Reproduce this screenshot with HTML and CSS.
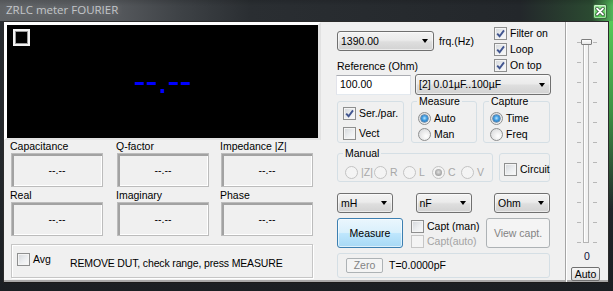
FILE: index.html
```html
<!DOCTYPE html>
<html>
<head>
<meta charset="utf-8">
<title>ZRLC meter FOURIER</title>
<link rel="stylesheet" href="styles.css">
</head>
<body>
<div class="window">
  <div class="titlebar">
    <span class="title">ZRLC meter FOURIER</span>
    <span class="close"><svg width="12" height="13" viewBox="0 0 12 13"><path d="M3 3.5 L9 9.5 M9 3.5 L3 9.5" stroke="#2f4f33" stroke-width="3.4" stroke-linecap="round"/><path d="M3 3.5 L9 9.5 M9 3.5 L3 9.5" stroke="#fff" stroke-width="1.8" stroke-linecap="round"/></svg></span>
  </div>
  <div class="client">
    <div class="left">
      <div class="scope">
        <span class="scope-box"></span>
        <span class="scope-value">--.--</span>
      </div>
      <div class="readings">
        <div class="reading"><div class="reading-label">Capacitance</div><div class="reading-box">--.--</div></div>
        <div class="reading"><div class="reading-label">Q-factor</div><div class="reading-box">--.--</div></div>
        <div class="reading"><div class="reading-label">Impedance |Z|</div><div class="reading-box">--.--</div></div>
        <div class="reading"><div class="reading-label">Real</div><div class="reading-box">--.--</div></div>
        <div class="reading"><div class="reading-label">Imaginary</div><div class="reading-box">--.--</div></div>
        <div class="reading"><div class="reading-label">Phase</div><div class="reading-box">--.--</div></div>
      </div>
      <div class="status">
        <label class="check status-check"><span class="cb"></span><span>Avg</span></label>
        <span class="status-msg">REMOVE DUT, check range, press MEASURE</span>
      </div>
    </div>
    <div class="right">
      <div class="controls">
        <div class="top">
          <div class="top-left">
            <div class="freq-row">
              <div class="combo combo-freq"><span>1390.00</span><i class="arrow"></i></div>
              <span class="freq-label">frq.(Hz)</span>
            </div>
            <div class="ref-label">Reference (Ohm)</div>
          </div>
          <div class="top-checks">
            <label class="check"><span class="cb"><svg class="tick" width="11" height="11" viewBox="0 0 11 11"><path d="M2.2 5.6 L4.6 8.2 L9 2.4" stroke="#41558f" stroke-width="1.9" fill="none"/></svg></span><span>Filter on</span></label>
            <label class="check"><span class="cb"><svg class="tick" width="11" height="11" viewBox="0 0 11 11"><path d="M2.2 5.6 L4.6 8.2 L9 2.4" stroke="#41558f" stroke-width="1.9" fill="none"/></svg></span><span>Loop</span></label>
            <label class="check"><span class="cb"><svg class="tick" width="11" height="11" viewBox="0 0 11 11"><path d="M2.2 5.6 L4.6 8.2 L9 2.4" stroke="#41558f" stroke-width="1.9" fill="none"/></svg></span><span>On top</span></label>
          </div>
        </div>
        <div class="ref-row">
          <div class="input">100.00</div>
          <div class="combo combo-range"><span>[2] 0.01µF..100µF</span><i class="arrow"></i></div>
        </div>
        <div class="groups-row">
          <fieldset class="group group-serpar">
            <div class="group-body col gap7">
              <label class="check"><span class="cb"><svg class="tick" width="11" height="11" viewBox="0 0 11 11"><path d="M2.2 5.6 L4.6 8.2 L9 2.4" stroke="#41558f" stroke-width="1.9" fill="none"/></svg></span><span>Ser./par.</span></label>
              <label class="check"><span class="cb"></span><span>Vect</span></label>
            </div>
          </fieldset>
          <fieldset class="group group-measure">
            <legend>Measure</legend>
            <div class="group-body col">
              <label class="radio"><span class="rb on"><span class="dot"></span></span><span>Auto</span></label>
              <label class="radio"><span class="rb"></span><span>Man</span></label>
            </div>
          </fieldset>
          <fieldset class="group group-capture">
            <legend>Capture</legend>
            <div class="group-body col">
              <label class="radio"><span class="rb on"><span class="dot"></span></span><span>Time</span></label>
              <label class="radio"><span class="rb"></span><span>Freq</span></label>
            </div>
          </fieldset>
        </div>
        <div class="manual-row">
          <fieldset class="group group-manual">
            <legend>Manual</legend>
            <div class="group-body row">
              <label class="radio disabled"><span class="rb"></span><span>|Z|</span></label>
              <label class="radio disabled"><span class="rb"></span><span>R</span></label>
              <label class="radio disabled"><span class="rb"></span><span>L</span></label>
              <label class="radio disabled"><span class="rb on"><span class="dot"></span></span><span>C</span></label>
              <label class="radio disabled"><span class="rb"></span><span>V</span></label>
            </div>
          </fieldset>
          <fieldset class="group group-circuit">
            <div class="group-body">
              <label class="check"><span class="cb"></span><span>Circuit</span></label>
            </div>
          </fieldset>
        </div>
        <div class="units-row">
          <div class="combo combo-unit"><span>mH</span><i class="arrow"></i></div>
          <div class="combo combo-unit"><span>nF</span><i class="arrow"></i></div>
          <div class="combo combo-unit"><span>Ohm</span><i class="arrow"></i></div>
        </div>
        <div class="action-row">
          <div class="btn btn-measure">Measure</div>
          <div class="capt-checks">
            <label class="check"><span class="cb"></span><span>Capt (man)</span></label>
            <label class="check disabled"><span class="cb"></span><span>Capt(auto)</span></label>
          </div>
          <div class="btn btn-disabled btn-view">View capt.</div>
        </div>
        <fieldset class="group group-zero">
          <div class="group-body zero-body">
            <div class="btn btn-disabled btn-zero">Zero</div>
            <span class="zero-text">T=0.0000pF</span>
          </div>
        </fieldset>
      </div>
      <div class="slider-col">
        <div class="slider">
          <span class="ticks"></span>
          <span class="track"><span class="thumb"></span></span>
          <span class="ticks"></span>
        </div>
        <div class="slider-value">0</div>
        <div class="btn-auto">Auto</div>
      </div>
    </div>
  </div>
</div>
</body>
</html>
```

FILE: styles.css
```css
* { box-sizing: border-box; }
html, body { margin: 0; padding: 0; }
body {
  width: 613px;
  height: 291px;
  overflow: hidden;
  background: #202428;
  font-family: "Liberation Sans", Arial, sans-serif;
  font-size: 10.5px;
  line-height: 13px;
  color: #000;
}

.window {
  width: 613px;
  height: 291px;
  display: flex;
  flex-direction: column;
  background:
    linear-gradient(180deg, rgba(95, 225, 95, 0.95) 0, rgba(70, 180, 75, 0.75) 110px, rgba(40, 60, 45, 0) 210px) right top / 5px 100% no-repeat,
    linear-gradient(180deg, #2a2e32 0, #23272b 60%, #1b1f23 100%);
}

/* title bar */
.titlebar {
  height: 21px;
  display: flex;
  align-items: flex-start;
  justify-content: space-between;
  padding: 0 6px;
  background:
    linear-gradient(180deg, rgba(0, 0, 0, 0.12) 0, rgba(0, 0, 0, 0) 6px),
    linear-gradient(90deg, #606366 0, #585b5f 110px, #3e4246 180px, #2a2e32 250px, #23272b 520px, #2b4a31 592px, #52b85a 613px);
}
.title {
  margin-top: 3px;
  font-family: "Open Sans", "Noto Sans", sans-serif;
  font-size: 11.5px;
  line-height: 14px;
  color: #c2c5c8;
  text-shadow: 0 0 6px rgba(255, 255, 255, 0.25);
}
.close {
  margin-top: 4px;
  width: 14px;
  height: 15px;
  border: 1px solid #3c6a40;
  border-radius: 2px;
  background: linear-gradient(180deg, #a5eea5 0, #6fd86f 50%, #4cc44f 100%);
  box-shadow: inset 0 0 0 1px rgba(255, 255, 255, 0.45);
  display: flex;
  align-items: center;
  justify-content: center;
}

/* client area */
.client {
  height: 262px;
  margin: 0 4px 0 3px;
  border: 1px solid #2b2b2b;
  border-bottom-color: #1a1a1a;
  background: #f0f0f0;
  display: flex;
  box-shadow: inset 0 -2px 0 #a9a9a9;
}

.left {
  width: 317px;
  display: flex;
  flex-direction: column;
}

.scope {
  height: 118px;
  border-style: solid;
  border-width: 3px 3px 2px 3px;
  border-color: #fff #e2e2e2 #e2e2e2 #fff;
  background: #000;
  display: grid;
}
.scope-box {
  grid-area: 1 / 1;
  align-self: start;
  justify-self: start;
  width: 17px;
  height: 17px;
  margin: 4px 0 0 6px;
  border: 2px solid #f2f2f2;
  box-shadow: inset 0 0 0 1px #9a9a9a;
}
.scope-value {
  grid-area: 1 / 1;
  align-self: start;
  justify-self: center;
  margin-top: 38px;
  font-family: "Liberation Sans", Arial, sans-serif;
  font-size: 36px;
  line-height: 36px;
  color: #0000ff;
}

.readings {
  display: grid;
  grid-template-columns: 106px 104px 92px;
  row-gap: 2px;
  padding-left: 6px;
}
.reading-label {
  height: 13px;
  white-space: nowrap;
}
.reading-box {
  width: 92px;
  height: 34px;
  margin-left: 1px;
  border: 1px solid #bcbcbc;
  box-shadow: inset 2px 2px 0 #a2a2a2, inset -1px -1px 0 #fff;
  display: flex;
  align-items: center;
  justify-content: center;
}

.status {
  margin: 8px 0 0 7px;
  width: 302px;
  height: 34px;
  border: 1px solid #c6c6c6;
  box-shadow: inset 1px 1px 0 #fff, 1px 1px 0 #fff;
  display: flex;
  align-items: flex-start;
  padding: 8px 0 0 5px;
}
.status-check { width: 53px; }
.status-msg {
  margin-top: 4px;
  white-space: nowrap;
  letter-spacing: -0.15px;
}

/* checkbox & radio */
.check, .radio {
  display: flex;
  align-items: center;
  gap: 3px;
  height: 13px;
  white-space: nowrap;
}
.cb {
  flex: none;
  width: 13px;
  height: 13px;
  border: 1px solid #8e8f8f;
  background: linear-gradient(135deg, #d3d6da 0, #eceef0 55%, #fafafa 100%);
  box-shadow: inset 0 0 0 1px #f4f4f4;
  display: flex;
  align-items: center;
  justify-content: center;
}
.tick { display: block; }
.check.disabled { color: #a3a3a3; }
.check.disabled .cb {
  border-color: #c6c6c6;
  background: #f4f4f4;
}
.rb {
  flex: none;
  width: 13px;
  height: 13px;
  border: 1px solid #8e8f8f;
  border-radius: 50%;
  background: radial-gradient(circle at 65% 65%, #ffffff 0, #eeeeee 40%, #d1d3d6 100%);
  display: flex;
  align-items: center;
  justify-content: center;
}
.dot {
  width: 7px;
  height: 7px;
  border-radius: 50%;
  background: radial-gradient(circle at 50% 45%, #b8e6ff 0, #3e9ae0 45%, #1a5a93 100%);
  box-shadow: 0 0 0 0.5px #1c4c7c;
}
.radio.disabled { color: #a8a8a8; }
.radio.disabled .rb {
  border-color: #c3c3c3;
  background: #f4f4f4;
}
.radio.disabled .dot {
  background: radial-gradient(circle at 50% 45%, #e0e0e0 0, #a9a9a9 60%, #8f8f8f 100%);
  box-shadow: none;
}

/* right panel */
.right {
  flex: 1;
  display: flex;
  padding-left: 16px;
}
.controls {
  width: 214px;
  display: flex;
  flex-direction: column;
}
.top {
  height: 52px;
  padding-top: 5px;
  display: flex;
}
.top-left { width: 157px; }
.freq-row {
  display: flex;
  align-items: center;
  margin-top: 4px;
  height: 20px;
}
.freq-label { margin-left: 5px; }
.ref-label { margin-top: 9px; white-space: nowrap; }
.top-checks {
  display: flex;
  flex-direction: column;
  gap: 3px;
}

.combo {
  height: 20px;
  border: 1px solid #707070;
  border-radius: 3px;
  background: linear-gradient(180deg, #f3f3f3 0, #ebebeb 45%, #dedede 55%, #d2d2d2 100%);
  box-shadow: inset 0 0 0 1px rgba(255, 255, 255, 0.55);
  display: flex;
  align-items: center;
  justify-content: space-between;
  padding: 0 5px 0 3px;
  white-space: nowrap;
}
.arrow {
  width: 0;
  height: 0;
  border-left: 3.5px solid transparent;
  border-right: 3.5px solid transparent;
  border-top: 4px solid #000;
}
.combo-freq { width: 97px; }
.ref-row {
  display: flex;
  align-items: center;
  height: 21px;
}
.input {
  width: 75px;
  height: 20px;
  margin-left: -1px;
  border: 1px solid;
  border-color: #abadb3 #dbdfe6 #e3e9ef #e2e3ea;
  background: #fff;
  padding-left: 3px;
  display: flex;
  align-items: center;
}
.combo-range {
  width: 136px;
  height: 21px;
  margin-left: 4px;
}

.group {
  margin: 0;
  padding: 0;
  min-width: 0;
  border: 1px solid #d5dfe5;
  border-radius: 3px;
}
.group legend {
  margin-left: 5px;
  padding: 0 2px;
  height: 12px;
  line-height: 12px;
}
.col { display: flex; flex-direction: column; }
.row { display: flex; }
.gap7 { gap: 7px; }

.groups-row {
  display: flex;
  align-items: flex-start;
}
.group-serpar {
  width: 67px;
  height: 42px;
  margin-top: 6px;
  margin-right: 7px;
}
.group-serpar .group-body { padding: 5px 0 0 5px; }
.group-measure { width: 66px; margin-right: 6px; }
.group-capture { width: 67px; }
.group-measure .group-body,
.group-capture .group-body { padding: 3px 0 0 6px; }
.group-measure .radio,
.group-capture .radio { height: 16px; }

.manual-row {
  display: flex;
  align-items: flex-start;
  margin-top: 4px;
}
.group-manual { width: 156px; }
.group-manual .group-body { padding: 5px 0 1px 7px; }
.group-manual .radio { width: 29px; height: 16px; gap: 3px; }
.group-circuit {
  width: 51px;
  height: 29px;
  margin: 6px 0 0 6px;
}
.group-circuit .group-body { padding: 9px 0 0 4px; }

.units-row {
  display: flex;
  justify-content: space-between;
  width: 213px;
  margin-top: 11px;
}
.combo-unit { width: 56px; }

.action-row {
  display: flex;
  width: 213px;
  height: 30px;
  margin-top: 5px;
}
.btn {
  display: flex;
  align-items: center;
  justify-content: center;
  border-radius: 3px;
  white-space: nowrap;
}
.btn-measure {
  width: 66px;
  height: 30px;
  border: 1px solid #3c7fb1;
  background: linear-gradient(180deg, #eaf6fd 0, #d9f0fc 48%, #bee6fd 52%, #a7d9f5 100%);
  box-shadow: inset 0 0 0 1px rgba(255, 255, 255, 0.6);
}
.btn-disabled {
  border: 1px solid #adb2b5;
  background: #f4f4f4;
  color: #838383;
}
.capt-checks {
  margin-left: 8px;
  padding-top: 2px;
  display: flex;
  flex-direction: column;
  gap: 2px;
}
.btn-view {
  margin-left: auto;
  width: 64px;
  height: 30px;
}

.group-zero {
  width: 213px;
  height: 25px;
  margin-top: 5px;
}
.zero-body {
  height: 23px;
  display: flex;
  align-items: center;
  padding-left: 8px;
}
.btn-zero {
  width: 37px;
  height: 15px;
  border-radius: 2px;
}
.zero-text { margin-left: 6px; }

/* slider column */
.slider-col {
  flex: 1;
  margin-left: 14px;
  border-left: 1px solid #a5a5a5;
  box-shadow: inset 1px 0 0 #fff;
  display: flex;
  flex-direction: column;
  align-items: center;
  padding-top: 18px;
}
.slider {
  display: flex;
  height: 203px;
}
.ticks {
  width: 4px;
  height: 203px;
  background: repeating-linear-gradient(180deg, #b8b8b8 0, #b8b8b8 1px, transparent 1px, transparent 20px);
  background-position: 0 2px;
}
.track {
  position: relative;
  width: 6px;
  height: 203px;
  margin: 0 4px 0 2px;
  border: 1px solid #b4b4b4;
  background: #f3f3f3;
  box-shadow: inset 1px 0 0 #fff;
}
.thumb {
  position: absolute;
  top: -2px;
  left: -3px;
  width: 11px;
  height: 6px;
  border: 1px solid #7e7e7e;
  border-radius: 1px;
  background: linear-gradient(180deg, #ffffff, #e6e6e6);
}
.slider-value {
  margin-top: 7px;
  height: 13px;
  color: #10103a;
}
.btn-auto {
  margin-top: 4px;
  margin-right: 3px;
  width: 29px;
  height: 14px;
  border: 1px solid #707070;
  border-radius: 2px;
  background: linear-gradient(180deg, #f6f6f6, #dcdcdc);
  line-height: 12px;
  text-align: center;
}
```
